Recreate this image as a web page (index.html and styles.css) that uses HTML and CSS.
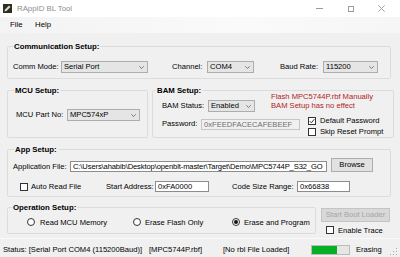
FILE: index.html
```html
<!DOCTYPE html>
<html lang="en">
<head>
<meta charset="utf-8">
<title>RAppID BL Tool</title>
<link rel="stylesheet" href="styles.css">
</head>
<body>
<div class="window">
  <header class="titlebar">
    <svg class="appicon" viewBox="0 0 9 9" width="9" height="9"><rect width="9" height="9" fill="#2e2d1f"/><path d="M1.5 7.5 L2 5.5 L6 1.5 L7.5 3 L3.5 7 Z" fill="#d9d9cc"/></svg>
    <span class="title">RAppID BL Tool</span>
    <div class="winctl">
      <span class="ctl"><svg width="7" height="1" viewBox="0 0 7 1"><rect width="7" height="1" fill="#9a9a9a"/></svg></span>
      <span class="ctl"><svg width="6" height="6" viewBox="0 0 6 6"><rect x="0.5" y="0.5" width="5" height="5" fill="none" stroke="#9a9a9a"/></svg></span>
      <span class="ctl"><svg width="7" height="7" viewBox="0 0 7 7"><path d="M0.3 0.3 L6.7 6.7 M6.7 0.3 L0.3 6.7" stroke="#9a9a9a" stroke-width="0.9"/></svg></span>
    </div>
  </header>

  <nav class="menubar">
    <span class="menu m-file">File</span>
    <span class="menu">Help</span>
  </nav>

  <main class="form">
    <fieldset class="group g-comm">
      <legend class="lg-comm">Communication Setup:</legend>
      <div class="r-comm">
        <span class="lbl w-comm">Comm Mode:</span>
        <div class="combo w-mode"><span>Serial Port</span><svg class="chev" width="5" height="3" viewBox="0 0 5 3"><path d="M0.3 0.3 L2.5 2.5 L4.7 0.3" fill="none" stroke="#606060" stroke-width="0.8"/></svg></div>
        <span class="lbl w-chan">Channel:</span>
        <div class="combo w-com"><span>COM4</span><svg class="chev" width="5" height="3" viewBox="0 0 5 3"><path d="M0.3 0.3 L2.5 2.5 L4.7 0.3" fill="none" stroke="#606060" stroke-width="0.8"/></svg></div>
        <span class="lbl w-baud">Baud Rate:</span>
        <div class="combo w-rate"><span>115200</span><svg class="chev" width="5" height="3" viewBox="0 0 5 3"><path d="M0.3 0.3 L2.5 2.5 L4.7 0.3" fill="none" stroke="#606060" stroke-width="0.8"/></svg></div>
      </div>
    </fieldset>

    <div class="r-mb">
      <fieldset class="group g-mcu">
        <legend class="lg-mcu">MCU Setup:</legend>
        <div class="mcu-body">
          <span class="lbl w-part">MCU Part No:</span>
          <div class="combo w-part-sel"><span>MPC574xP</span><svg class="chev" width="5" height="3" viewBox="0 0 5 3"><path d="M0.3 0.3 L2.5 2.5 L4.7 0.3" fill="none" stroke="#606060" stroke-width="0.8"/></svg></div>
        </div>
      </fieldset>

      <fieldset class="group g-bam">
        <legend class="lg-bam">BAM Setup:</legend>
        <div class="bam-body">
          <div class="bam-a">
            <div class="bam-ctl">
              <span class="lbl w-bams">BAM Status:</span>
              <div class="combo w-en"><span>Enabled</span><svg class="chev" width="5" height="3" viewBox="0 0 5 3"><path d="M0.3 0.3 L2.5 2.5 L4.7 0.3" fill="none" stroke="#606060" stroke-width="0.8"/></svg></div>
            </div>
            <div class="warn">Flash MPC5744P.rbf Manually<br>BAM Setup has no effect</div>
          </div>
          <div class="bam-b">
            <div class="pw">
              <span class="lbl w-pw">Password:</span>
              <div class="tb tb-dis w-pwbox">0xFEEDFACECAFEBEEF</div>
            </div>
            <div class="checks">
              <div class="chk-row"><span class="cb"><svg width="6" height="6" viewBox="0 0 6 6"><path d="M0.8 3.2 L2.4 4.8 L5.3 1.2" fill="none" stroke="#222" stroke-width="0.9"/></svg></span><span>Default Password</span></div>
              <div class="chk-row"><span class="cb"></span><span>Skip Reset Prompt</span></div>
            </div>
          </div>
        </div>
      </fieldset>
    </div>

    <fieldset class="group g-app">
      <legend class="lg-app">App Setup:</legend>
      <div class="app-body">
        <div class="app-r1">
          <span class="lbl w-file">Application File:</span>
          <div class="tb w-path">C:\Users\ahabib\Desktop\openblt-master\Target\Demo\MPC5744P_S32_GO</div>
          <div class="btn w-browse">Browse</div>
        </div>
        <div class="app-r2">
          <div class="autoread"><span class="cb"></span><span>Auto Read File</span></div>
          <span class="lbl w-start">Start Address:</span>
          <div class="tb w-addr">0xFA0000</div>
          <span class="lbl w-size">Code Size Range:</span>
          <div class="tb w-sz">0x66838</div>
        </div>
      </div>
    </fieldset>

    <div class="r-op">
      <fieldset class="group g-op">
        <legend class="lg-op">Operation Setup:</legend>
        <div class="op-body">
          <div class="ri ri1"><span class="rb"></span><span>Read MCU Memory</span></div>
          <div class="ri ri2"><span class="rb"></span><span>Erase Flash Only</span></div>
          <div class="ri"><span class="rb on"></span><span>Erase and Program</span></div>
        </div>
      </fieldset>
      <div class="opside">
        <div class="btn btn-dis w-start-bl">Start Boot Loader</div>
        <div class="trace"><span class="cb"></span><span>Enable Trace</span></div>
      </div>
    </div>
  </main>

  <footer class="statusbar">
    <span class="s1">Status: [Serial Port COM4 (115200Baud)]</span>
    <span class="s2">[MPC5744P.rbf]</span>
    <span class="s3">[No rbl File Loaded]</span>
    <div class="progress"><div class="fill" style="width:25px"></div></div>
    <span class="s4">Erasing</span>
    <svg class="grip" width="10" height="10" viewBox="0 0 10 10"><g fill="#a8a8a8"><rect x="8" y="2" width="1" height="1"/><rect x="8" y="5" width="1" height="1"/><rect x="5" y="5" width="1" height="1"/><rect x="8" y="8" width="1" height="1"/><rect x="5" y="8" width="1" height="1"/><rect x="2" y="8" width="1" height="1"/></g></svg>
  </footer>
</div>
</body>
</html>
```

FILE: styles.css
```css
* { box-sizing: border-box; }
html, body { margin: 0; padding: 0; }
body {
  width: 400px;
  height: 257px;
  overflow: hidden;
  background: #f0f0f0;
  font-family: "Liberation Sans", Arial, sans-serif;
  font-size: 7.6px;
  color: #000;
}
.window { display: flex; flex-direction: column; height: 257px; }

/* title bar */
.titlebar { height: 17px; background: #fff; display: flex; align-items: center; flex: none; }
.appicon { margin-left: 3px; display: block; }
.title { margin-left: 5px; color: #8c8c8c; font-size: 7.8px; line-height: 17px; }
.winctl { margin-left: auto; margin-right: 3px; display: flex; height: 17px; }
.ctl { width: 31px; height: 17px; display: flex; align-items: center; justify-content: center; }
.ctl svg { display: block; }

/* menu */
.menubar {
  height: 16px; flex: none; display: flex; align-items: center;
  background: linear-gradient(to right, #f3f3f3, #fafafa 60%, #f6f6f6);
}
.menu { line-height: 16px; font-size: 7.8px; }
.m-file { margin-left: 10px; width: 25px; }

/* form */
.form { padding-left: 7px; display: flex; flex-direction: column; flex: none; }
.group {
  margin: 0; padding: 0; min-width: 0;
  border: 1px solid #dcdcdc; border-radius: 2px;
}
.group legend { font-weight: bold; font-size: 7.8px; line-height: 9px; padding: 0 1px; }
.lg-comm { margin-left: 5px; }
.lg-mcu { margin-left: 6px; }
.lg-bam { margin-left: 3px; }
.lg-app { margin-left: 6px; }
.lg-op { margin-left: 4px; }

.lbl { line-height: 12px; white-space: nowrap; flex: none; }
.combo {
  height: 12px; flex: none;
  border: 1px solid #adadad; background: #e5e5e5;
  display: flex; align-items: center; justify-content: space-between;
  padding: 0 3px 0 2px; line-height: 10px; white-space: nowrap;
}
.chev { display: block; flex: none; }
.tb {
  height: 11px; flex: none; overflow: hidden; white-space: nowrap;
  border: 1px solid #8c8c8c; background: #fff;
  padding: 0 2px; line-height: 9px;
}
.tb-dis { border-color: #c6c6c6; background: #f0f0f0; color: #6d6d6d; }
.btn {
  height: 14px; flex: none; text-align: center; line-height: 12px;
  border: 1px solid #adadad; background: #e1e1e1; white-space: nowrap;
}
.btn-dis { border-color: #c4c4c4; background: #d8d8d8; color: #a6a6a6; }
.cb {
  width: 8px; height: 8px; flex: none;
  border: 1px solid #333; background: #fff;
  display: flex; align-items: center; justify-content: center;
}
.cb svg { display: block; }
.rb { width: 8px; height: 8px; flex: none; border: 1px solid #333; border-radius: 50%; background: #fff; }
.rb.on::after { content: ""; display: block; width: 4px; height: 4px; margin: 1px; border-radius: 50%; background: #111; }

/* communication */
.g-comm { margin-top: 9px; width: 384px; }
.r-comm { display: flex; align-items: center; padding: 10px 0 5px 5px; }
.w-comm { width: 48px; }
.w-mode { width: 87px; }
.w-chan { width: 35px; margin-left: 24px; }
.w-com { width: 47px; }
.w-baud { width: 43px; margin-left: 26px; }
.w-rate { width: 55px; }

/* mcu / bam */
.r-mb { display: flex; gap: 4px; margin-top: 7px; height: 52px; }
.g-mcu { width: 141px; }
.g-bam { width: 242px; }
.mcu-body { display: flex; align-items: center; padding: 14px 0 0 8px; }
.w-part { width: 51px; }
.w-part-sel { width: 73px; }

.bam-body { padding-left: 9px; }
.bam-a { display: flex; align-items: flex-start; height: 17px; }
.bam-ctl { display: flex; align-items: center; margin-top: 5px; }
.w-bams { width: 46px; }
.w-en { width: 47px; }
.warn { margin-left: 16px; margin-top: -3px; color: #b22222; line-height: 9px; white-space: nowrap; }
.bam-b { display: flex; align-items: flex-start; height: 25px; }
.pw { display: flex; align-items: center; margin-top: 6px; }
.w-pw { width: 39px; }
.w-pwbox { width: 99px; }
.checks { margin-left: 8px; margin-top: 3px; }
.chk-row { display: flex; align-items: center; gap: 4px; height: 11px; white-space: nowrap; }

/* app */
.g-app { margin-top: 7px; width: 384px; }
.app-body { padding: 4px 0 4px 5px; }
.app-r1 { display: flex; align-items: flex-end; height: 14px; }
.w-file { width: 57px; line-height: 11px; }
.w-path { width: 257px; letter-spacing: -0.12px; }
.w-browse { width: 42px; margin-left: 4px; }
.app-r2 { display: flex; align-items: center; height: 11px; margin-top: 9px; }
.autoread { width: 86px; margin-left: 7px; display: flex; align-items: center; gap: 3px; white-space: nowrap; }
.w-start { width: 49px; }
.w-addr { width: 54px; }
.w-size { width: 65px; margin-left: 23px; }
.w-sz { width: 53px; }

/* operation */
.r-op { display: flex; gap: 5px; margin-top: 6px; }
.g-op { width: 309px; }
.op-body { display: flex; align-items: center; height: 20px; padding: 5px 0 5px 19px; }
.ri { display: flex; align-items: center; gap: 4px; white-space: nowrap; }
.ri1 { width: 106px; gap: 5px; }
.ri2 { width: 99px; }
.opside { display: flex; flex-direction: column; }
.w-start-bl { width: 69px; margin-top: 5px; }
.trace { display: flex; align-items: center; gap: 4px; margin: 4px 0 0 5px; height: 8px; white-space: nowrap; }

/* status */
.statusbar {
  margin-top: auto; height: 19px; flex: none;
  border-top: 1px solid #f9f9f9;
  display: flex; align-items: center;
  padding: 3px 0 0 3px;
  font-size: 7.6px; white-space: nowrap;
}
.s1 { width: 146px; }
.s2 { width: 74px; }
.s3 { width: 88px; }
.progress { width: 39px; height: 10px; border: 1px solid #bcbcbc; background: #e6e6e6; margin-right: 6px; flex: none; }
.fill { height: 100%; background: #06b025; }
.s4 { flex: none; }
.grip { margin-left: auto; margin-right: 2px; align-self: flex-end; margin-bottom: 1px; display: block; }
```
